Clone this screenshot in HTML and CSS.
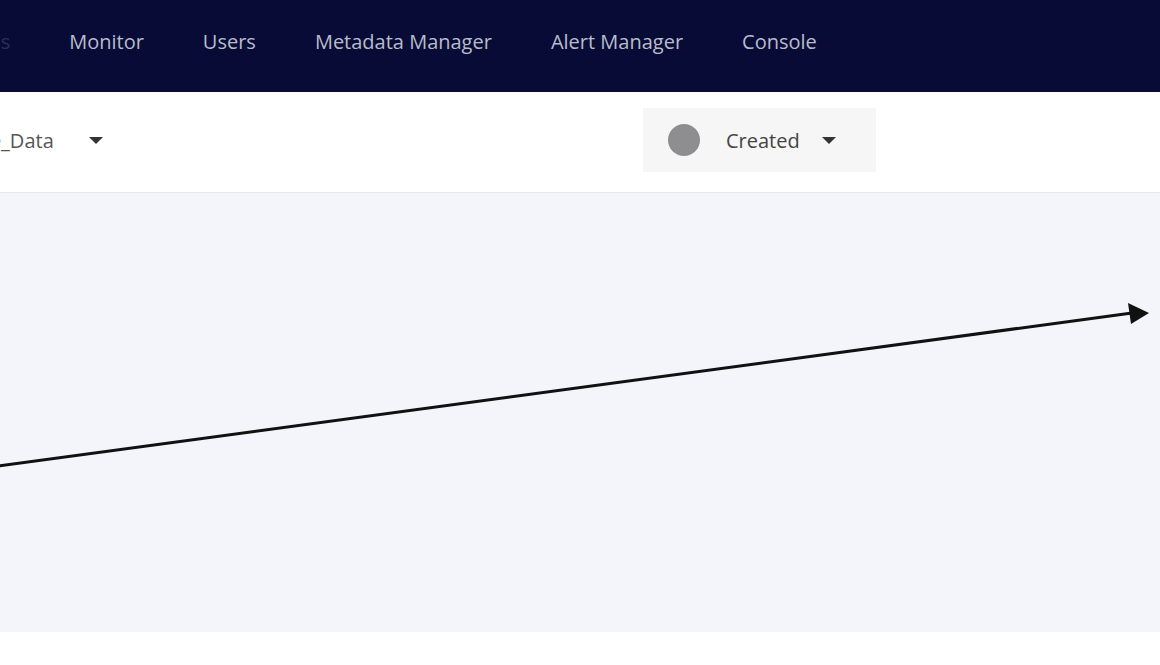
FILE: index.html
```html
<!DOCTYPE html>
<html lang="en">

<head>
    <meta charset="UTF-8">
    <meta name="viewport" content="width=device-width, initial-scale=1.0">
    <title>Pipeline</title>
    <link rel="stylesheet" href="styles.css">
</head>

<body>

    <header class="topbar">
        <nav class="nav-links">
            <a href="#" class="nav-cut">Jobs</a>
            <a href="#">Monitor</a>
            <a href="#">Users</a>
            <a href="#">Metadata Manager</a>
            <a href="#">Alert Manager</a>
            <a href="#">Console</a>
        </nav>
    </header>

    <div class="toolbar">
        <div class="dataset">
            <span class="dataset-name">Sample_Data</span>
            <span class="caret"></span>
        </div>
        <div class="status">
            <span class="status-dot"></span>
            <span class="status-text">Created</span>
            <span class="caret"></span>
        </div>
    </div>

    <main class="canvas">
        <!-- flow arrow drawn on the canvas -->
        <svg class="flow-arrow" width="1160" height="440" viewBox="0 0 1160 440">
            <line x1="-2" y1="273" x2="1132" y2="120" stroke="#111" stroke-width="3" />
            <polygon points="1149,120 1128,110 1131,131" fill="#111" />
        </svg>
    </main>

</body>

</html>
```

FILE: styles.css
```css
body {
    margin: 0;
    font-family: "Open Sans", "Noto Sans", sans-serif;
    background-color: #fff;
    overflow: hidden;
}

.topbar {
    height: 92px;
    background-color: #070b35;
    display: flex;
    align-items: center;
    overflow: hidden;
}

.nav-links {
    display: flex;
    gap: 59px;
    margin-left: -29px; /* first item is cut off by the window */
    padding-bottom: 10px;
}

.nav-links a {
    color: #b9bccb;
    text-decoration: none;
    font-size: 20px;
    white-space: nowrap;
}

.nav-links .nav-cut {
    color: #2a2f58;
}

.toolbar {
    height: 96px;
    padding-bottom: 4px;
    display: flex;
    align-items: center;
    border-bottom: 1px solid #e6e7ee;
    box-shadow: 0 1px 2px rgba(0, 0, 0, 0.04);
    overflow: hidden;
}

.dataset {
    display: flex;
    align-items: center;
    margin-left: -68px; /* name runs off the left edge */
    width: 711px;
}

.dataset-name {
    font-size: 20px;
    color: #555;
    margin-right: 35px;
}

.caret {
    width: 0;
    height: 0;
    border-left: 7px solid transparent;
    border-right: 7px solid transparent;
    border-top: 7px solid #333;
}

.status {
    width: 233px;
    height: 64px;
    box-sizing: border-box;
    padding-left: 25px;
    background-color: #f6f6f6;
    display: flex;
    align-items: center;
}

.status-dot {
    width: 32px;
    height: 32px;
    border-radius: 50%;
    background-color: #8e8e90;
    margin-right: 26px;
}

.status-text {
    font-size: 20px;
    color: #444;
    margin-right: 22px;
}

.canvas {
    position: relative;
    height: 439px;
    background-color: #f4f5fa;
}

.flow-arrow {
    position: absolute;
    left: 0;
    top: 0;
}
```
